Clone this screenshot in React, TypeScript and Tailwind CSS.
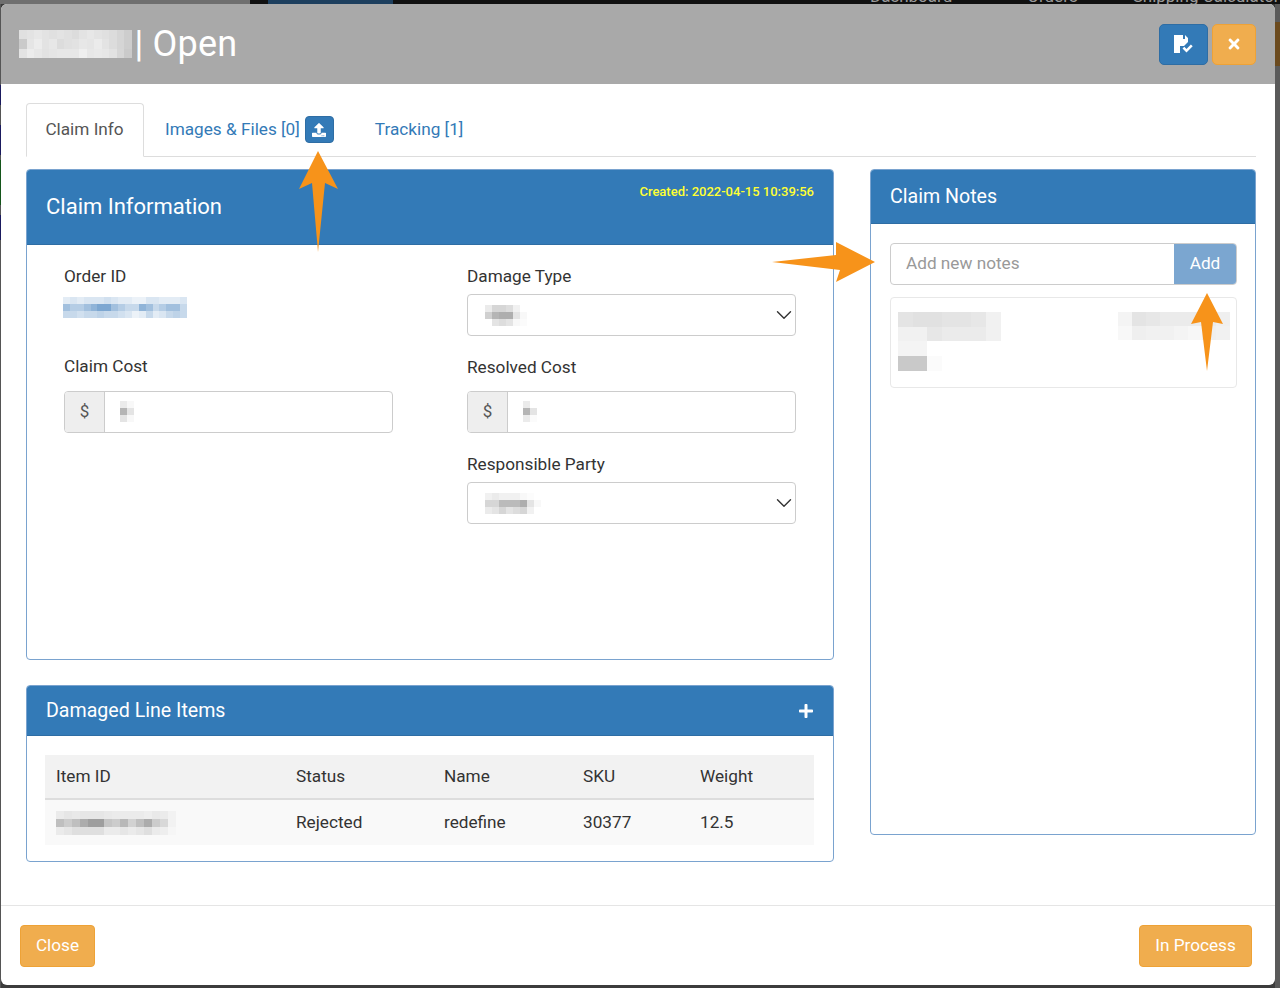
import React from 'react'
import { FaPlus, FaTimes, FaUpload } from 'react-icons/fa'
import { LuChevronDown } from 'react-icons/lu'

const Mosaic = ({ cols, cell, shades, className = '' }: { cols: number; cell: number; shades: number[]; className?: string }) => (
  <div className={`grid shrink-0 ${className}`} style={{ gridTemplateColumns: `repeat(${cols}, ${cell}px)`, gridAutoRows: `${cell}px` }}>
    {shades.map((s, i) => (
      <div key={i} style={{ backgroundColor: `rgba(120,120,120,${s})` }} />
    ))}
  </div>
)

const BlueMosaic = ({ cols, cell, shades }: { cols: number; cell: number; shades: number[] }) => (
  <div className="grid shrink-0" style={{ gridTemplateColumns: `repeat(${cols}, ${cell}px)`, gridAutoRows: `${cell}px` }}>
    {shades.map((s, i) => (
      <div key={i} style={{ backgroundColor: `rgba(70,130,190,${s})` }} />
    ))}
  </div>
)

const TitleMosaic = () => {
  const shades = [
    .75, .8, .85, .8, .75, .8, .75, .7, .8, .85, .8, .75, .7, .6, .5, .45, .82, .92, .8, .85, .7, .75, .78, .85, .82, .9, .8, .7, .6, .5,
    .8, .92, .85, .78, .82, .85, .85, .85, .95, .85, .88, .85, .78, .62, .45, .45, .8, .95, .88, .8, .85, .85, .9, .8, .85, .92, .9, .75, .6, .45,
  ]
  return (
    <div className="grid shrink-0" style={{ gridTemplateColumns: 'repeat(15, 7.5px)', gridAutoRows: '9.5px' }}>
      {shades.slice(0, 45).map((s, i) => (
        <div key={i} style={{ backgroundColor: `rgba(255,255,255,${s * 0.85})` }} />
      ))}
    </div>
  )
}

const Panel = ({ header, className, children }: { header: React.ReactNode; className: string; children: React.ReactNode }) => (
  <section className={`border border-[#7aa3cf] rounded-[4px] overflow-hidden bg-white ${className}`}>
    {header}
    {children}
  </section>
)

const MoneyInput = ({ shades }: { shades: number[] }) => (
  <div className="flex h-[42px] border border-[#ccc] rounded-[4px] overflow-hidden">
    <div className="w-[40px] bg-[#eee] border-r border-[#ccc] flex items-center justify-center text-[#555] text-[17px]">$</div>
    <div className="flex-1 flex items-center pl-[15px] pb-[2px]">
      <Mosaic cols={3} cell={7} shades={shades} />
    </div>
  </div>
)

const SelectBox = ({ shades, cols }: { shades: number[]; cols: number }) => (
  <div className="flex items-center justify-between h-[42px] border border-[#ccc] rounded-[4px] pl-[17px]">
    <Mosaic cols={cols} cell={7} shades={shades} />
    <LuChevronDown className="w-[26px] h-[26px] -mr-[2px] text-[#333]" strokeWidth={1.3} />
  </div>
)

const Arrow = ({ points }: { points: string }) => (
  <svg className="absolute top-0 left-0 pointer-events-none" width="1280" height="988" viewBox="0 0 1280 988">
    <polygon points={points} fill="#f7931a" />
  </svg>
)

export default function App() {
  return (
    <div className="relative w-[1280px] h-[988px] overflow-hidden bg-[#3c3c3c] font-['Roboto',sans-serif] text-[#333] pl-[1px] pt-[4px]">
      {/* page behind the modal */}
      <div className="absolute top-0 left-0 w-full h-[4px] flex bg-[#111] overflow-hidden text-[17px] leading-none text-[#9a9a9a]">
        <div className="w-[250px] bg-[#6f6f6f]" />
        <div className="w-[18px]" />
        <div className="w-[125px] bg-[#1d3f5e]" />
        <span className="ml-[477px] relative -top-[12px] whitespace-nowrap">Dashboard</span>
        <span className="ml-[75px] relative -top-[12px] whitespace-nowrap">Orders</span>
        <span className="ml-[55px] relative -top-[12px] whitespace-nowrap">Shipping Calculator</span>
      </div>
      <div className="absolute top-[4px] right-0 w-[5px] h-[984px] bg-[#5a5a5a] flex flex-col">
        <div className="mt-[18px] h-[44px] bg-[#6b4a1e]" />
      </div>
      <div className="absolute top-[4px] left-0 w-[1px] h-[984px] bg-[#555] flex flex-col">
        <div className="mt-[81px] h-[20px] bg-[#1a1a5e]" />
        <div className="mt-[20px] h-[30px] bg-[#1a1a5e]" />
        <div className="mt-[5px] h-[45px] bg-[#14551a]" />
        <div className="mt-[10px] h-[25px] bg-[#1a1a5e]" />
      </div>

      <div className="relative w-[1274px] h-[981px] bg-white rounded-[6px] overflow-hidden flex flex-col">
        {/* modal header */}
        <header className="h-[80px] shrink-0 bg-[#a9a9a9] flex items-center justify-between pl-[18px] pr-[19px]">
          <div className="flex items-center text-white text-[36px] leading-none">
            <TitleMosaic />
            <span className="ml-[3px] -mt-[1px] tracking-[0.2px]">| Open</span>
          </div>
          <div className="flex gap-[4px]">
            <button className="w-[49px] h-[41px] bg-[#337ab7] border border-[#2e6da4] rounded-[5px] flex items-center justify-center">
              <svg width="19" height="18" viewBox="0 0 19 18" fill="white">
                <path d="M0 0h9v4h2V0l3 3v4l-4 4H6v7H0z" />
                <path d="M8.5 13.5l1.8-1.8 2.2 2.2 4.4-4.4 1.8 1.8-6.2 6.2z" />
              </svg>
            </button>
            <button className="w-[44px] h-[41px] bg-[#f0ad4e] border border-[#eea236] rounded-[5px] flex items-center justify-center">
              <FaTimes className="w-[16px] h-[16px] text-white" />
            </button>
          </div>
        </header>

        <div className="flex-1 pl-[25px] pr-[19px] pt-[19px]">
          {/* tabs */}
          <nav className="flex h-[54px] border-b border-[#ddd] text-[17.2px] text-[#337ab7]">
            <div className="w-[118px] h-[54px] border border-[#ddd] border-b-white bg-white rounded-t-[4px] flex items-center justify-center text-[#555] pr-[1px]">Claim Info</div>
            <div className="flex items-center ml-[21px]">
              <span>Images &amp; Files [0]</span>
              <button className="ml-[5px] w-[29px] h-[27px] bg-[#337ab7] border border-[#2e6da4] rounded-[4px] flex items-center justify-center">
                <FaUpload className="w-[14px] h-[14px] text-white" />
              </button>
            </div>
            <div className="flex items-center ml-[41px]">Tracking [1]</div>
          </nav>

          <div className="flex justify-between mt-[12px]">
            <div className="w-[808px] flex flex-col gap-[25px]">
              {/* claim information */}
              <Panel
                className="h-[491px]"
                header={
                  <div className="h-[75px] bg-[#337ab7] border-b border-[#2e6da4] flex justify-between px-[19px] text-white">
                    <h2 className="text-[22px] leading-none mt-[26px]">Claim Information</h2>
                    <span className="text-[13px] leading-none mt-[15px] text-[#ffff33] font-medium">Created: 2022-04-15 10:39:56</span>
                  </div>
                }
              >
                <div className="grid grid-cols-[329px_329px] gap-x-[74px] pl-[37px] text-[17.2px]">
                  <div>
                    <div className="mt-[21px] leading-[20px]">Order ID</div>
                    <div className="mt-[11px] h-[21px] -ml-[1px]">
                      <BlueMosaic cols={18} cell={6.9} shades={[
                        .15, .2, .15, .2, .2, .2, .25, .2, .15, .15, .1, .1, .2, .2, .15, .15, .15, .2,
                        .5, .4, .4, .5, .6, .7, .7, .5, .4, .3, .3, .6, .5, .3, .4, .5, .5, .3,
                        .3, .3, .25, .3, .3, .35, .3, .3, .25, .2, .1, .15, .3, .15, .2, .3, .35, .3,
                      ]} />
                    </div>
                    <div className="mt-[38px] leading-[20px]">Claim Cost</div>
                    <div className="mt-[15px]"><MoneyInput shades={[.15, .05, 0, .55, .2, 0, .2, .05, 0]} /></div>
                  </div>
                  <div>
                    <div className="mt-[21px] leading-[20px]">Damage Type</div>
                    <div className="mt-[8px]">
                      <SelectBox cols={8} shades={[.15, .3, .3, .25, .1, 0, 0, 0, .35, .55, .6, .6, .2, .05, 0, 0, 0, .2, .25, .2, .05, .03, 0, 0]} />
                    </div>
                    <div className="mt-[21px] leading-[20px]">Resolved Cost</div>
                    <div className="mt-[14px]"><MoneyInput shades={[.15, 0, 0, .55, .2, 0, .15, .03, 0]} /></div>
                    <div className="mt-[21px] leading-[20px]">Responsible Party</div>
                    <div className="mt-[8px]">
                      <SelectBox cols={9} shades={[.1, .15, .1, .1, .1, .05, .02, 0, 0, .3, .3, .5, .5, .5, .6, .2, .05, 0, .15, .2, .3, .2, .25, .3, .1, 0, 0]} />
                    </div>
                  </div>
                </div>
              </Panel>

              {/* damaged line items */}
              <Panel
                className="h-[177px]"
                header={
                  <div className="h-[50px] bg-[#337ab7] border-b border-[#2e6da4] flex items-center justify-between px-[19px] text-white">
                    <h2 className="text-[19.6px]">Damaged Line Items</h2>
                    <FaPlus className="w-[16px] h-[16px]" />
                  </div>
                }
              >
                <div className="mt-[19px] ml-[18px] mr-[19px] text-[17.2px] text-[#333]">
                  <div className="grid grid-cols-[240px_148px_139px_117px_1fr] items-center h-[45px] pl-[11px] bg-[#f2f2f2] border-b-2 border-[#ddd]">
                    <span>Item ID</span>
                    <span>Status</span>
                    <span>Name</span>
                    <span>SKU</span>
                    <span>Weight</span>
                  </div>
                  <div className="grid grid-cols-[240px_148px_139px_117px_1fr] items-center h-[45px] pl-[11px] pt-[1px] bg-[#f9f9f9]">
                    <Mosaic cols={16} cell={8} shades={[
                      .1, .15, .12, .15, .15, .15, .12, .1, .1, .1, .1, .08, .12, .1, .05, 0,
                      .45, .35, .45, .6, .7, .7, .4, .35, .5, .3, .45, .6, .35, .25, .05, 0,
                      .1, .15, .2, .2, .2, .2, .1, .1, .15, .1, .15, .2, .1, .08, .02, 0,
                    ]} />
                    <span>Rejected</span>
                    <span>redefine</span>
                    <span>30377</span>
                    <span>12.5</span>
                  </div>
                </div>
              </Panel>
            </div>

            {/* claim notes */}
            <Panel
              className="w-[386px] h-[666px]"
              header={
                <div className="h-[54px] bg-[#337ab7] border-b border-[#2e6da4] flex items-center px-[19px] pt-[1px] text-white">
                  <h2 className="text-[19.6px]">Claim Notes</h2>
                </div>
              }
            >
              <div className="pl-[19px] pr-[18px] pt-[19px]">
                <div className="flex h-[42px] border border-[#ccc] rounded-[4px] overflow-hidden text-[17.2px]">
                  <div className="flex-1 flex items-center pl-[15px] text-[#999]">Add new notes</div>
                  <div className="w-[62px] bg-[#7ba6d0] flex items-center justify-center text-white">Add</div>
                </div>
                <div className="mt-[12px] h-[91px] border border-[#e8e8e8] rounded-[4px] pl-[7px] pr-[6px] pt-[14px] flex justify-between items-start">
                  <Mosaic cols={7} cell={14.7} shades={[
                    .2, .22, .22, .2, .2, .18, .1,
                    .1, .1, .18, .15, .15, .15, .1,
                    .08, .08, 0, 0, 0, 0, 0,
                    .4, .4, .03, 0, 0, 0, 0,
                  ]} />
                  <Mosaic cols={8} cell={14} shades={[
                    .08, .2, .18, .15, .15, .15, .15, .12,
                    .05, .12, .1, .1, .08, .06, .12, .1,
                  ]} />
                </div>
              </div>
            </Panel>
          </div>
        </div>

        {/* modal footer */}
        <footer className="h-[80px] shrink-0 border-t border-[#e5e5e5] flex items-center justify-between pl-[19px] pr-[23px] text-[17.2px] text-white">
          <button className="w-[75px] h-[42px] bg-[#f0ad4e] border border-[#eea236] rounded-[4px]">Close</button>
          <button className="w-[113px] h-[42px] bg-[#f0ad4e] border border-[#eea236] rounded-[4px]">In Process</button>
        </footer>
      </div>

      {/* annotation arrows */}
      <Arrow points="318,151 338,189 325,183 318,252 312,183 299,189" />
      <Arrow points="772,262 836,255 836,242 875,262 836,282 840,270" />
      <Arrow points="1207,293 1223,324 1213,322 1207,371 1201,322 1191,324" />
    </div>
  )
}
